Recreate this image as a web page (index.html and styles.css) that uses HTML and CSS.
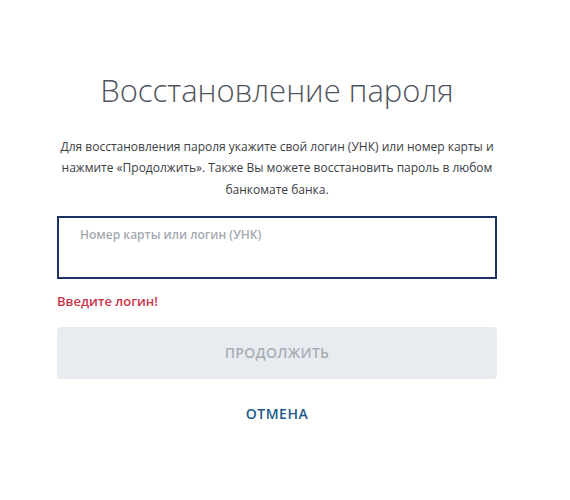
FILE: index.html
```html
<!DOCTYPE html>
<html lang="ru">
<head>
<meta charset="utf-8">
<title>Восстановление пароля</title>
<link rel="stylesheet" href="styles.css">
</head>
<body>
<main class="page">
  <h1 class="title">Восстановление пароля</h1>
  <p class="lead">Для восстановления пароля укажите свой логин (УНК) или номер карты и нажмите «Продолжить». Также Вы можете восстановить пароль в любом банкомате банка.</p>
  <div class="field"><span class="placeholder">Номер карты или логин (УНК)</span></div>
  <div class="error">Введите логин!</div>
  <button class="btn-primary" type="button">ПРОДОЛЖИТЬ</button>
  <div class="cancel">ОТМЕНА</div>
</main>
</body>
</html>
```

FILE: styles.css
```css
html, body {
  margin: 0;
  padding: 0;
  background: #ffffff;
}
body {
  font-family: "Open Sans", "Noto Sans", sans-serif;
}
.page {
  width: 440px;
  margin-left: 57px;
  padding-top: 70px;
  display: flex;
  flex-direction: column;
}
.title {
  margin: 0;
  font-weight: 300;
  font-size: 31px;
  line-height: 40px;
  color: #50545d;
  text-align: center;
}
.lead {
  margin: 26px 0 0;
  font-size: 12px;
  line-height: 21.3px;
  color: #3a3d43;
  text-align: center;
}
.field {
  margin-top: 16px;
  height: 63px;
  box-sizing: border-box;
  border: 2px solid #1b3262;
  padding: 9px 21px;
}
.placeholder {
  display: block;
  font-size: 12px;
  line-height: 16px;
  font-weight: 600;
  color: #a5a9b0;
}
.error {
  margin-top: 14px;
  font-size: 13px;
  line-height: 16px;
  font-weight: 600;
  color: #c8344a;
}
.btn-primary {
  margin-top: 18px;
  height: 52px;
  border: 0;
  border-radius: 4px;
  background: #e8ecf1;
  color: #a8aeb6;
  font-family: inherit;
  font-size: 14px;
  font-weight: 600;
  letter-spacing: 0.3px;
  display: flex;
  align-items: center;
  justify-content: center;
  padding: 0;
}
.cancel {
  margin-top: 25px;
  font-size: 14px;
  line-height: 20px;
  font-weight: 600;
  letter-spacing: 0.5px;
  color: #1d5a8b;
  text-align: center;
}
```
